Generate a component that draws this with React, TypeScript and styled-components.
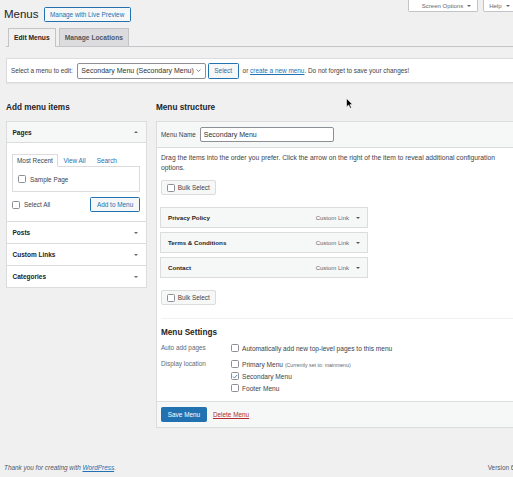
import React from "react";
import styled, { createGlobalStyle } from "styled-components";

const GlobalStyle = createGlobalStyle`
  html, body { margin: 0; padding: 0; overflow: hidden; }
  body {
    background: #f0f0f1;
    font-family: "Liberation Sans", Arial, sans-serif;
    font-size: 6.4px;
    color: #3c434a;
    width: 513px;
    height: 477px;
  }
  * { box-sizing: border-box; }
`;

const Page = styled.div`
  position: relative;
  width: 526px;
  min-height: 477px;
  display: flex;
  flex-direction: column;
`;

const Wrap = styled.div`
  padding: 0 4px 0 6px;
`;

const TopBar = styled.div`
  display: flex;
  justify-content: space-between;
  align-items: flex-start;
`;

const TitleRow = styled.div`
  display: flex;
  align-items: center;
  gap: 5px;
  margin: 7px 0 0 -2px;
`;

const Title = styled.h1`
  margin: 0;
  font-size: 11.5px;
  line-height: 15px;
  font-weight: 400;
  color: #1d2327;
`;

const OutlineButton = styled.span<{ $h?: number; $pad?: number }>`
  display: inline-flex;
  align-items: center;
  justify-content: center;
  height: ${(p) => p.$h ?? 15}px;
  padding: 0 ${(p) => p.$pad ?? 5.5}px;
  border: 1px solid #2271b1;
  border-radius: 1.5px;
  background: #f6f7f7;
  color: #2271b1;
  font-size: 6.4px;
  white-space: nowrap;
  flex: none;
`;

const PrimaryButton = styled.span`
  display: inline-flex;
  align-items: center;
  height: 15px;
  padding: 0 5.8px;
  border: 1px solid #2271b1;
  border-radius: 1.5px;
  background: #2271b1;
  color: #fff;
  font-size: 6.4px;
  white-space: nowrap;
`;

const ScreenMeta = styled.div`
  display: flex;
  gap: 5px;
  margin-right: 6px;
`;

const MetaTab = styled.span<{ $padLeft: number }>`
  display: flex;
  align-items: center;
  gap: 4px;
  height: 12px;
  padding: 0 5.5px 0 ${(p) => p.$padLeft}px;
  background: #fff;
  border: 1px solid #c3c4c7;
  border-top: none;
  border-radius: 0 0 2px 2px;
  font-size: 6px;
  color: #646970;
`;

const Caret = styled.span<{ $up?: boolean; $color?: string }>`
  display: inline-block;
  width: 0;
  height: 0;
  flex: none;
  border-left: 2.3px solid transparent;
  border-right: 2.3px solid transparent;
  ${(p) =>
    p.$up
      ? `border-bottom: 2.8px solid ${p.$color ?? "#646970"};`
      : `border-top: 2.8px solid ${p.$color ?? "#646970"};`}
`;

const TabBar = styled.div`
  display: flex;
  align-items: flex-end;
  gap: 3px;
  margin-top: 6px;
  padding-left: 2px;
  border-bottom: 1px solid #c3c4c7;
`;

const NavTab = styled.span<{ $active?: boolean }>`
  height: ${(p) => (p.$active ? 19 : 18)}px;
  margin-bottom: ${(p) => (p.$active ? -1 : 0)}px;
  padding: 0 5px;
  border: 1px solid #c3c4c7;
  border-bottom: none;
  background: ${(p) => (p.$active ? "#f0f0f1" : "#dcdcde")};
  color: ${(p) => (p.$active ? "#1d2327" : "#50575e")};
  font-size: 6.7px;
  font-weight: 700;
  line-height: 17px;
`;

const ManageBar = styled.div`
  display: flex;
  align-items: center;
  height: 25px;
  margin-top: 11px;
  padding: 0 4px;
  background: #fff;
  border: 1px solid #dcdcde;
  box-shadow: 0 1px 1px rgba(0, 0, 0, 0.04);
  white-space: nowrap;
`;

const MenuSelect = styled.span`
  display: flex;
  align-items: center;
  justify-content: space-between;
  width: 129px;
  height: 16px;
  margin: 0 2px 0 4px;
  padding: 0 4px 0 3.5px;
  background: #fff;
  border: 1px solid #8c8f94;
  border-radius: 2px;
  font-size: 7px;
  color: #2c3338;
`;

const Link = styled.a<{ $danger?: boolean }>`
  color: ${(p) => (p.$danger ? "#b32d2e" : "#2271b1")};
  text-decoration: underline;
`;

const Hint = styled.span`
  margin-left: 4px;
`;

const Columns = styled.div`
  display: flex;
  align-items: flex-start;
  margin-top: 19px;
`;

const SideCol = styled.div`
  width: 141px;
  flex: none;
`;

const MainCol = styled.div`
  flex: 1;
  min-width: 0;
  margin-left: 9px;
`;

const Heading = styled.h2`
  margin: 0 0 8px;
  font-size: 8.2px;
  line-height: 11px;
  font-weight: 700;
  color: #1d2327;
`;

const Accordion = styled.div`
  background: #fff;
  border: 1px solid #dcdcde;
`;

const Section = styled.div`
  border-bottom: 1px solid #dcdcde;
  &:last-child {
    border-bottom: none;
  }
`;

const SectionTitle = styled.div<{ $open?: boolean }>`
  display: flex;
  align-items: center;
  justify-content: space-between;
  height: 21px;
  padding: 0 8.5px 0 5.5px;
  background: ${(p) => (p.$open ? "#f6f7f7" : "#fff")};
  border-bottom: ${(p) => (p.$open ? "1px solid #dcdcde" : "none")};
  font-size: 6.5px;
  font-weight: 700;
  color: #1d2327;
`;

const SectionBody = styled.div`
  padding: 12px 6px 9px 5px;
`;

const PanelTabs = styled.div`
  position: relative;
  z-index: 1;
  display: flex;
  align-items: flex-end;
  height: 12px;
  margin-bottom: -1px;
`;

const PanelTab = styled.span<{ $active?: boolean }>`
  height: ${(p) => (p.$active ? 13 : 12)}px;
  padding: 0 ${(p) => (p.$active ? 4 : 5.5)}px;
  line-height: 11px;
  ${(p) =>
    p.$active
      ? `border: 1px solid #dcdcde; border-bottom-color: #fff; background: #fff; color: #3c434a;`
      : `color: #2271b1;`}
`;

const ListBox = styled.div`
  display: flex;
  align-items: center;
  gap: 4px;
  height: 26px;
  padding-left: 5px;
  border: 1px solid #dcdcde;
`;

const ActionRow = styled.div`
  display: flex;
  align-items: center;
  justify-content: space-between;
  margin-top: 5px;
`;

const CheckLabel = styled.label`
  display: flex;
  align-items: center;
  gap: 4px;
`;

const Box = styled.span`
  display: inline-flex;
  align-items: center;
  justify-content: center;
  width: 8px;
  height: 8px;
  flex: none;
  background: #fff;
  border: 1px solid #8c8f94;
  border-radius: 1.5px;
`;

const MenuEdit = styled.div`
  background: #fff;
  border: 1px solid #dcdcde;
`;

const MenuHeader = styled.div`
  display: flex;
  align-items: center;
  gap: 4px;
  height: 26px;
  padding: 0 4px;
  background: #f6f7f7;
  border-bottom: 1px solid #dcdcde;
`;

const NameInput = styled.span`
  display: flex;
  align-items: center;
  width: 134px;
  height: 15px;
  padding: 0 3px;
  background: #fff;
  border: 1px solid #8c8f94;
  border-radius: 2px;
  font-size: 7px;
  color: #2c3338;
`;

const MenuBody = styled.div`
  padding: 5px 4px 7px 4px;
`;

const Description = styled.p`
  max-width: 346px;
  margin: 0;
  font-size: 6.75px;
  line-height: 10px;
`;

const BulkButton = styled.span<{ $top: number }>`
  display: inline-flex;
  align-items: center;
  gap: 3.2px;
  height: 15px;
  margin-top: ${(p) => p.$top}px;
  padding: 0 5px 0 4.5px;
  background: #f6f7f7;
  border: 1px solid #dcdcde;
  border-radius: 2px;
`;

const MenuList = styled.div`
  display: flex;
  flex-direction: column;
  gap: 4px;
  margin: 12px 0 12px -1px;
`;

const MenuItem = styled.div`
  display: flex;
  align-items: center;
  justify-content: space-between;
  width: 208px;
  height: 21px;
  padding: 0 7px;
  background: #f6f7f7;
  border: 1px solid #dcdcde;
`;

const ItemTitle = styled.span`
  font-size: 6.2px;
  font-weight: 700;
  color: #1d2327;
`;

const ItemControls = styled.span`
  display: flex;
  align-items: center;
  gap: 7px;
  font-size: 6px;
  color: #646970;
`;

const Settings = styled.div`
  margin-top: 13px;
  padding-top: 7.5px;
  border-top: 1px solid #f0f0f1;
`;

const SettingsHeading = styled.h3`
  margin: 0 0 4.5px;
  font-size: 8.2px;
  line-height: 11px;
  font-weight: 700;
  color: #1d2327;
`;

const SettingsGrid = styled.div`
  display: grid;
  grid-template-columns: 70px 1fr;
  row-gap: 4px;
`;

const SettingLabel = styled.div`
  line-height: 12px;
  color: #646970;
`;

const Options = styled.div`
  display: flex;
  flex-direction: column;
`;

const Option = styled.label`
  display: flex;
  align-items: center;
  gap: 3px;
  height: 12px;
  font-size: 6.6px;
`;

const Note = styled.span`
  font-size: 5.2px;
  color: #646970;
`;

const MenuFooter = styled.div`
  display: flex;
  align-items: center;
  gap: 6px;
  height: 26px;
  padding: 0 4px;
  background: #f6f7f7;
  border-top: 1px solid #dcdcde;
`;

const Footer = styled.footer`
  display: flex;
  justify-content: space-between;
  margin-top: auto;
  padding: 0 1px 4px 4px;
  line-height: 10px;
  color: #50575e;
`;

const Thanks = styled.span`
  font-style: italic;
`;

const Cursor = styled.svg`
  position: absolute;
  left: 346px;
  top: 98px;
`;

function Checkbox({ checked }: { checked?: boolean }) {
  return (
    <Box>
      {checked && (
        <svg width="7" height="7" viewBox="0 0 10 10">
          <path d="M1.8 5.2 L4.1 7.5 L8.4 2.4" stroke="#3582c4" strokeWidth="1.5" fill="none" />
        </svg>
      )}
    </Box>
  );
}

const items = ["Privacy Policy", "Terms & Conditions", "Contact"];

export default function App() {
  return (
    <>
      <GlobalStyle />
      <Page>
        <Wrap>
          <TopBar>
            <TitleRow>
              <Title>Menus</Title>
              <OutlineButton>Manage with Live Preview</OutlineButton>
            </TitleRow>
            <ScreenMeta>
              <MetaTab $padLeft={12.5}>
                Screen Options <Caret />
              </MetaTab>
              <MetaTab $padLeft={5.5}>
                Help <Caret />
              </MetaTab>
            </ScreenMeta>
          </TopBar>

          <TabBar>
            <NavTab $active>Edit Menus</NavTab>
            <NavTab>Manage Locations</NavTab>
          </TabBar>

          <ManageBar>
            <span>Select a menu to edit:</span>
            <MenuSelect>
              <span>Secondary Menu (Secondary Menu)</span>
              <svg width="5" height="3" viewBox="0 0 10 6">
                <path d="M1 1 L5 5 L9 1" stroke="#50575e" strokeWidth="1.4" fill="none" />
              </svg>
            </MenuSelect>
            <OutlineButton $h={16}>Select</OutlineButton>
            <Hint>
              or <Link>create a new menu</Link>. Do not forget to save your changes!
            </Hint>
          </ManageBar>

          <Columns>
            <SideCol>
              <Heading>Add menu items</Heading>
              <Accordion>
                <Section>
                  <SectionTitle $open>
                    Pages <Caret $up />
                  </SectionTitle>
                  <SectionBody>
                    <PanelTabs>
                      <PanelTab $active>Most Recent</PanelTab>
                      <PanelTab>View All</PanelTab>
                      <PanelTab>Search</PanelTab>
                    </PanelTabs>
                    <ListBox>
                      <Checkbox />
                      <span>Sample Page</span>
                    </ListBox>
                    <ActionRow>
                      <CheckLabel>
                        <Checkbox />
                        Select All
                      </CheckLabel>
                      <OutlineButton $pad={5.8}>Add to Menu</OutlineButton>
                    </ActionRow>
                  </SectionBody>
                </Section>
                {["Posts", "Custom Links", "Categories"].map((t) => (
                  <Section key={t}>
                    <SectionTitle>
                      {t} <Caret />
                    </SectionTitle>
                  </Section>
                ))}
              </Accordion>
            </SideCol>

            <MainCol>
              <Heading>Menu structure</Heading>
              <MenuEdit>
                <MenuHeader>
                  <span>Menu Name</span>
                  <NameInput>Secondary Menu</NameInput>
                </MenuHeader>
                <MenuBody>
                  <Description>
                    Drag the items into the order you prefer. Click the arrow on the right of the item to reveal
                    additional configuration options.
                  </Description>
                  <BulkButton $top={7}>
                    <Checkbox />
                    Bulk Select
                  </BulkButton>
                  <MenuList>
                    {items.map((t) => (
                      <MenuItem key={t}>
                        <ItemTitle>{t}</ItemTitle>
                        <ItemControls>
                          Custom Link <Caret $color="#50575e" />
                        </ItemControls>
                      </MenuItem>
                    ))}
                  </MenuList>
                  <BulkButton $top={0}>
                    <Checkbox />
                    Bulk Select
                  </BulkButton>
                  <Settings>
                    <SettingsHeading>Menu Settings</SettingsHeading>
                    <SettingsGrid>
                      <SettingLabel>Auto add pages</SettingLabel>
                      <Options>
                        <Option>
                          <Checkbox />
                          Automatically add new top-level pages to this menu
                        </Option>
                      </Options>
                      <SettingLabel>Display location</SettingLabel>
                      <Options>
                        <Option>
                          <Checkbox />
                          <span>
                            Primary Menu <Note>(Currently set to: mainmenu)</Note>
                          </span>
                        </Option>
                        <Option>
                          <Checkbox checked />
                          Secondary Menu
                        </Option>
                        <Option>
                          <Checkbox />
                          Footer Menu
                        </Option>
                      </Options>
                    </SettingsGrid>
                  </Settings>
                </MenuBody>
                <MenuFooter>
                  <PrimaryButton>Save Menu</PrimaryButton>
                  <Link $danger>Delete Menu</Link>
                </MenuFooter>
              </MenuEdit>
            </MainCol>
          </Columns>
        </Wrap>

        <Footer>
          <Thanks>
            Thank you for creating with <Link>WordPress</Link>.
          </Thanks>
          <span>Version 6.4.3</span>
        </Footer>

        <Cursor width="7" height="11" viewBox="0 0 8 13">
          <path d="M0.5 0.5 L0.5 10.5 L3 8.3 L4.8 12.2 L6.3 11.5 L4.6 7.8 L7.6 7.8 Z" fill="#000" stroke="#fff" strokeWidth="0.7" />
        </Cursor>
      </Page>
    </>
  );
}
